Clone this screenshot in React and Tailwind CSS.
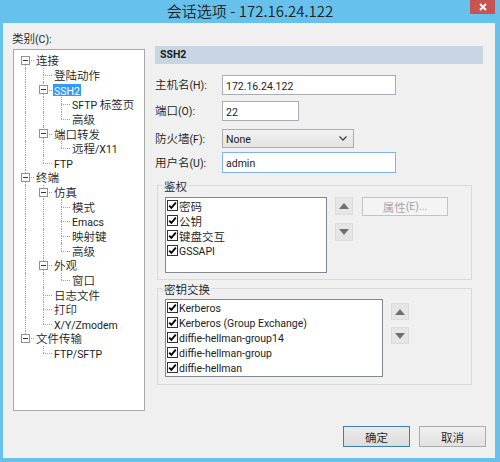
import React from 'react';

// Latin runs render narrower than the CJK ones, as in the original UI font
const T = ({ children }) => {
  const parts = String(children).split(/([\u0000-\u024f]+)/).filter(Boolean);
  return parts.map((p, i) =>
    /^[\u0000-\u024f]+$/.test(p) ? (
      <span key={i} className="font-['Roboto',sans-serif] font-normal text-[10.5px]">
        {p}
      </span>
    ) : (
      <span key={i}>{p}</span>
    )
  );
};

const TREE = [
  { t: '连接', d: 0, open: true },
  { t: '登陆动作', d: 1 },
  { t: 'SSH2', d: 1, open: true, sel: true },
  { t: 'SFTP 标签页', d: 2 },
  { t: '高级', d: 2 },
  { t: '端口转发', d: 1, open: true },
  { t: '远程/X11', d: 2 },
  { t: 'FTP', d: 1 },
  { t: '终端', d: 0, open: true },
  { t: '仿真', d: 1, open: true },
  { t: '模式', d: 2 },
  { t: 'Emacs', d: 2 },
  { t: '映射键', d: 2 },
  { t: '高级', d: 2 },
  { t: '外观', d: 1, open: true },
  { t: '窗口', d: 2 },
  { t: '日志文件', d: 1 },
  { t: '打印', d: 1 },
  { t: 'X/Y/Zmodem', d: 1 },
  { t: '文件传输', d: 0, open: true },
  { t: 'FTP/SFTP', d: 1 },
];

// is there a later sibling at the same depth before the parent closes?
const hasNext = (i) => {
  const d = TREE[i].d;
  for (let j = i + 1; j < TREE.length; j++) {
    if (TREE[j].d < d) return false;
    if (TREE[j].d === d) return true;
  }
  return false;
};

const LINE = 'absolute border-dotted border-[#a0a0a0]';

const TreeRow = ({ i }) => {
  const node = TREE[i];
  const cols = [];
  for (let L = 0; L < node.d; L++) {
    let anc = i;
    while (TREE[anc].d !== L) anc--;
    cols.push(hasNext(anc));
  }
  const first = i === 0;
  const next = hasNext(i);

  return (
    <div className="flex h-[14.65px] items-center">
      {cols.map((on, k) => (
        <div key={k} className="relative w-[18px] h-full shrink-0">
          {on && <div className={`${LINE} left-[9px] top-0 bottom-0 border-l`} />}
        </div>
      ))}
      <div className="relative w-[18px] h-full shrink-0">
        {!first && <div className={`${LINE} left-[9px] top-0 h-1/2 border-l`} />}
        {next && <div className={`${LINE} left-[9px] top-1/2 bottom-0 border-l`} />}
        <div className={`${LINE} left-[9px] right-0 top-1/2 border-t`} />
        {node.open && (
          <div className="absolute left-[5px] top-[3px] w-[9px] h-[9px] border border-[#919191] bg-white flex items-center justify-center">
            <div className="w-[5px] h-px bg-[#333]" />
          </div>
        )}
      </div>
      <span
        className={`ml-px px-px h-[12px] leading-[12px] whitespace-nowrap ${
          node.sel ? 'bg-[#3399ff] text-white' : ''
        }`}
      >
        <T>{node.t}</T>
      </span>
    </div>
  );
};

const Check = () => (
  <div className="w-[11px] h-[11px] border border-[#333] bg-white flex items-center justify-center shrink-0">
    <svg width="9" height="9" viewBox="0 0 9 9">
      <path d="M1.2 4.6 L3.4 6.9 L7.8 1.6" fill="none" stroke="#000" strokeWidth="1.8" />
    </svg>
  </div>
);

const CheckList = ({ items, className }) => (
  <div className={`bg-white border border-[#828790] ${className}`}>
    {items.map((t) => (
      <div key={t} className="flex items-center h-[15px] pl-[1px] gap-[1px]">
        <Check />
        <span className="leading-[14px] whitespace-nowrap">
          <T>{t}</T>
        </span>
      </div>
    ))}
  </div>
);

const ArrowBtn = ({ up, className }) => (
  <div className={`bg-[#e6e6e6] border border-[#dcdcdc] flex items-center justify-center ${className}`}>
    <svg width="10" height="6" viewBox="0 0 10 6">
      {up ? <path d="M0 6 L5 0 L10 6 Z" fill="#707070" /> : <path d="M0 0 L10 0 L5 6 Z" fill="#707070" />}
    </svg>
  </div>
);

const Field = ({ label, children, className = '' }) => (
  <div className={`flex items-center ${className}`}>
    <div className="w-[67px] leading-[16px]">
      <T>{label}</T>
    </div>
    {children}
  </div>
);

export default function App() {
  return (
    <div className="w-[500px] h-[462px] bg-[#66c2ec] flex flex-col overflow-hidden text-[11.5px] font-[350] text-[#1c1c1c] font-['Noto_Sans_CJK_SC','Noto_Sans',sans-serif]">
      {/* title bar */}
      <div className="relative h-[23px] shrink-0">
        <div className="text-center text-[15px] leading-[21px] text-[#222]">会话选项 - 172.16.24.122</div>
        <div className="absolute right-[5px] top-0 w-[25px] h-[14px] bg-[#c85452] flex items-center justify-center">
          <svg width="8" height="8" viewBox="0 0 8 8">
            <path d="M1 1 L7 7 M7 1 L1 7" stroke="#fff" strokeWidth="1.8" />
          </svg>
        </div>
      </div>

      {/* dialog body */}
      <div className="ml-[3px] mr-[5px] mb-[4px] flex-1 bg-[#f0f0f0] flex flex-col">
        <div className="flex pl-[10px] h-[388px]">
          {/* category tree */}
          <div className="w-[132px] flex flex-col shrink-0">
            <div className="h-[26px] pt-[6px] -ml-[1px] leading-[18px]">
              <T>类别(C):</T>
            </div>
            <div className="h-[362px] border border-[#a9a9a9] bg-white pt-[3px] pl-[2px]">
              {TREE.map((_, i) => (
                <TreeRow key={i} i={i} />
              ))}
            </div>
          </div>

          {/* SSH2 panel */}
          <div className="ml-[10px] w-[328px] mt-[23px]">
            <div className="h-[18px] bg-[#c8d5e2] pl-[5px] font-bold text-[10.5px] leading-[18px] text-[#1a1a1a] font-['Roboto',sans-serif]">SSH2</div>

            <Field label="主机名(H):" className="mt-[11px]">
              <div className="w-[174px] h-[20px] border border-[#abadb3] bg-white pl-[3px] leading-[18px]">
                <T>172.16.24.122</T>
              </div>
            </Field>
            <Field label="端口(O):" className="mt-[6px]">
              <div className="w-[77px] h-[20px] border border-[#abadb3] bg-white pl-[3px] leading-[18px]">
                <T>22</T>
              </div>
            </Field>
            <Field label="防火墙(F):" className="mt-[8px]">
              <div className="w-[132px] h-[19px] border border-[#acacac] bg-gradient-to-b from-[#f2f2f2] to-[#e3e3e3] pl-[3px] pr-[6px] flex items-center justify-between">
                <span className="leading-[17px]">
                  <T>None</T>
                </span>
                <svg width="8" height="5" viewBox="0 0 8 5">
                  <path d="M0.5 0.5 L4 4 L7.5 0.5" fill="none" stroke="#444" strokeWidth="1.3" />
                </svg>
              </div>
            </Field>
            <Field label="用户名(U):" className="mt-[4px]">
              <div className="w-[174px] h-[21px] border border-[#7eb4ea] bg-white pl-[3px] leading-[19px]">
                <T>admin</T>
              </div>
            </Field>

            {/* authentication */}
            <div className="mt-[12px] ml-[2px] w-[315px] h-[95px] border border-[#d9d9d9]">
              <div className="-mt-[8px] ml-[5px] w-fit px-px bg-[#f0f0f0] leading-[16px]">鉴权</div>
              <div className="flex mt-[3px] ml-[7px]">
                <CheckList items={['密码', '公钥', '键盘交互', 'GSSAPI']} className="w-[162px] h-[76px]" />
                <div className="ml-[8px] flex flex-col gap-[8px]">
                  <ArrowBtn up className="w-[18px] h-[18px]" />
                  <ArrowBtn className="w-[18px] h-[18px]" />
                </div>
                <div className="ml-[9px] w-[86px] h-[19px] border border-[#c3c3c3] bg-[#f4f4f4] text-[#a3a3a3] flex items-center justify-center leading-[16px]">
                  <T>属性(E)...</T>
                </div>
              </div>
            </div>

            {/* key exchange */}
            <div className="mt-[8px] ml-[2px] w-[315px] h-[97px] border border-[#d9d9d9]">
              <div className="-mt-[8px] ml-[5px] w-fit px-px bg-[#f0f0f0] leading-[16px]">密钥交换</div>
              <div className="flex mt-[2px] ml-[7px]">
                <CheckList
                  items={['Kerberos', 'Kerberos (Group Exchange)', 'diffie-hellman-group14', 'diffie-hellman-group', 'diffie-hellman']}
                  className="w-[218px] h-[78px]"
                />
                <div className="ml-[8px] mt-[4px] flex flex-col gap-[7px]">
                  <ArrowBtn up className="w-[18px] h-[17px]" />
                  <ArrowBtn className="w-[18px] h-[17px]" />
                </div>
              </div>
            </div>
          </div>
        </div>

        {/* buttons */}
        <div className="mt-[15px] flex justify-end gap-[9px] pr-[9px]">
          <div className="w-[67px] h-[21px] border border-[#3c7fb1] bg-gradient-to-b from-[#ececec] to-[#dcdcdc] flex items-center justify-center leading-[16px]">确定</div>
          <div className="w-[67px] h-[21px] border border-[#acacac] bg-gradient-to-b from-[#f0f0f0] to-[#e1e1e1] flex items-center justify-center leading-[16px]">取消</div>
        </div>
      </div>
    </div>
  );
}
